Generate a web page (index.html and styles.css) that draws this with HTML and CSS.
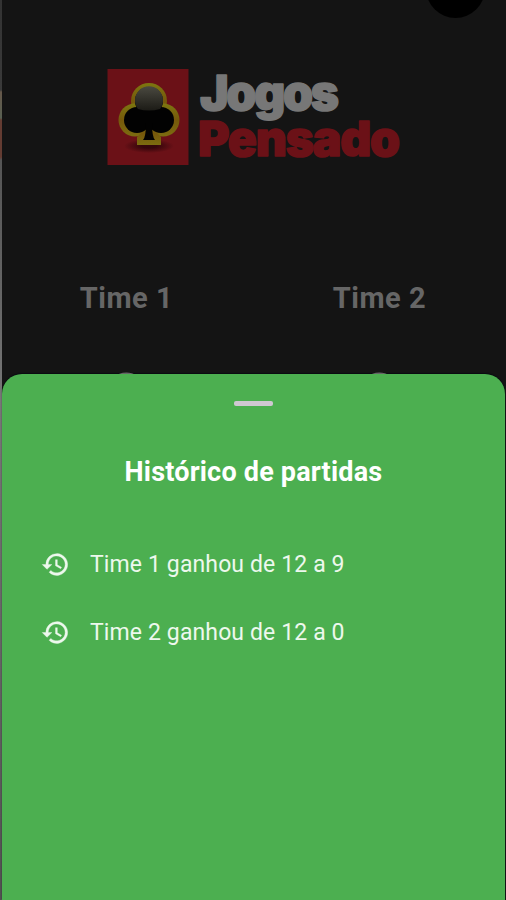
FILE: index.html
```html
<!DOCTYPE html>
<html lang="pt-BR">
<head>
    <meta charset="UTF-8">
    <title>Jogos Pensado</title>
    <link rel="stylesheet" href="styles.css">
</head>
<body>
<div id="wrap">
    <div class="edge"></div>
    <div class="screen">
        <div class="board">
            <span class="round_btn"></span>
            <svg class="logo" width="294" height="100" viewBox="0 0 294 100">
                <defs>
                    <linearGradient id="gold" x1="0" y1="0" x2="0" y2="1">
                        <stop offset="0" stop-color="#7d7710"/>
                        <stop offset=".5" stop-color="#76580b"/>
                        <stop offset="1" stop-color="#7c6c10"/>
                    </linearGradient>
                    <linearGradient id="shine" x1="0" y1="0" x2="0" y2="1">
                        <stop offset="0" stop-color="#4a4940"/>
                        <stop offset="1" stop-color="#1c1b16"/>
                    </linearGradient>
                    <radialGradient id="shadow">
                        <stop offset=".3" stop-color="#35060b"/>
                        <stop offset="1" stop-color="#35060b" stop-opacity="0"/>
                    </radialGradient>
                </defs>
                <rect class="card" x="1.5" y="2" width="81" height="96"/>
                <ellipse cx="43" cy="79" rx="25" ry="7" fill="url(#shadow)"/>
                <g fill="url(#gold)">
                    <circle cx="43" cy="34" r="18"/>
                    <circle cx="29" cy="53" r="16.5"/>
                    <circle cx="57" cy="53" r="16.5"/>
                    <path d="M34 55h18v9l-1 2 4 4v8H31v-8l4-4-1-2z"/>
                </g>
                <g fill="#020202">
                    <circle cx="43" cy="34" r="14"/>
                    <circle cx="31" cy="53" r="13"/>
                    <circle cx="55" cy="53" r="13"/>
                    <path d="M32 42h22v17H32z"/>
                    <path d="M40 56h6q0 14 3 17H37q3-3 3-17z"/>
                </g>
                <path d="M32 42a14 14 0 1 1 22 0q-11 3-22 0z" fill="url(#shine)"/>
                <text class="word" x="94" y="42.5" textLength="139" lengthAdjust="spacing">Jogos</text>
                <text class="word red" x="92" y="88.5" textLength="202" lengthAdjust="spacing">Pensado</text>
            </svg>
            <ul class="teams">
                <li>Time 1<span class="score">0</span></li>
                <li>Time 2<span class="score">0</span></li>
            </ul>
        </div>
        <div class="sheet">
            <div class="handle"></div>
            <h2>Histórico de partidas</h2>
            <ul class="history">
                <li>
                    <svg viewBox="0 0 24 24"><path d="M13 3a9 9 0 0 0-9 9H1l3.9 3.9.1.1L9 12H6a7 7 0 1 1 2.1 4.9l-1.4 1.5A9 9 0 1 0 13 3zm-1 5v5l4.3 2.5.7-1.2-3.5-2.1V8z"/></svg>
                    <span>Time 1 ganhou de 12 a 9</span>
                </li>
                <li>
                    <svg viewBox="0 0 24 24"><path d="M13 3a9 9 0 0 0-9 9H1l3.9 3.9.1.1L9 12H6a7 7 0 1 1 2.1 4.9l-1.4 1.5A9 9 0 1 0 13 3zm-1 5v5l4.3 2.5.7-1.2-3.5-2.1V8z"/></svg>
                    <span>Time 2 ganhou de 12 a 0</span>
                </li>
            </ul>
        </div>
    </div>
</div>
</body>
</html>
```
FILE: styles.css
```css
body, div, ul, li, h2, span {
    margin: 0;
    padding: 0;
}

ul, li {
    list-style-type: none;
}

body {
    background-color: #141414;
    font-family: Roboto, sans-serif;
}

#wrap {
    display: flex;
    height: 900px;
    overflow: hidden;
}

.edge {
    width: 2px;
    background: linear-gradient(#333 0, #3a3a3a 90px, #66584a 92px, #596052 118px, #643c32 120px, #643c32 157px, #555 160px, #666 300px, #777 400px, #686868 600px, #505050 900px);
}

.screen {
    display: flex;
    flex: 1;
    flex-direction: column;
    box-sizing: border-box;
}

.board {
    position: relative;
    overflow: hidden;
    height: 374px;
}

.round_btn {
    position: absolute;
    top: -41px;
    right: 21px;
    width: 59px;
    height: 59px;
    border-radius: 50%;
    background-color: #000;
}

.logo {
    display: block;
    margin: 67px 0 0 104px;
    overflow: visible;
}

.card {
    fill: #6b1117;
}

.word {
    fill: #777;
    stroke: #777;
    stroke-width: 1.5px;
    stroke-linejoin: round;
    font-family: Inter, sans-serif;
    font-size: 48px;
    font-weight: 900;
}

.red {
    fill: #6b1117;
    stroke: #6b1117;
}

.teams {
    display: flex;
    margin-top: 115px;
}

.teams li {
    flex: 1;
    color: #666;
    font-size: 29px;
    font-weight: 700;
    letter-spacing: .5px;
    line-height: 32px;
    text-align: center;
}

.teams li:first-child {
    margin-left: -2px;
}

.score {
    display: block;
    margin-top: 50px;
    font-size: 70px;
    line-height: 70px;
}

.sheet {
    flex: 1;
    margin-right: 1px;
    border-radius: 20px 20px 0 0;
    background-color: #4caf50;
    color: #fff;
    /* dark area stays behind the rounded corners */
    box-shadow: 0 -1px 1px #080b10;
}

.handle {
    width: 39px;
    height: 5px;
    margin: 27px auto 0;
    border-radius: 2px;
    background-color: #cfc8d2;
}

.sheet h2 {
    margin-top: 50px;
    font-size: 27px;
    font-weight: 700;
    letter-spacing: .2px;
    line-height: 32px;
    text-align: center;
}

.history {
    padding: 59px 0 0 39px;
}

.history li {
    display: flex;
    align-items: center;
    height: 34px;
    margin-bottom: 34px;
    color: #edf8ed;
    font-size: 23px;
    letter-spacing: .12px;
}

.history svg {
    width: 29px;
    height: 29px;
    margin-right: 20px;
    fill: #edf8ed;
    stroke: #edf8ed;
    stroke-width: .3px;
}
```
